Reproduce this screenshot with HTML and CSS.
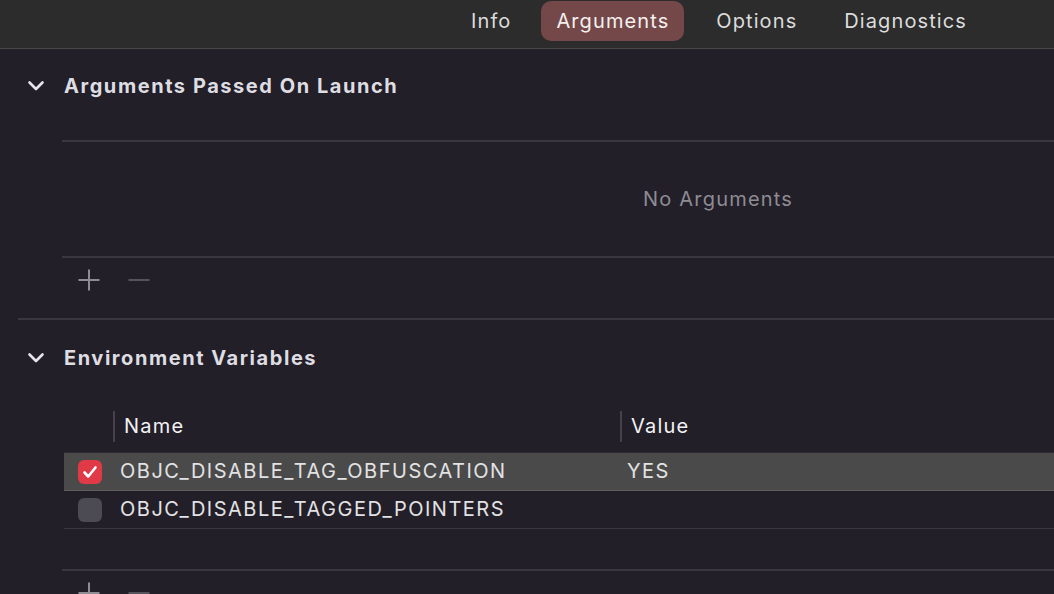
FILE: index.html
```html
<!DOCTYPE html>
<html>
<head>
<meta charset="utf-8">
<link rel="stylesheet" href="styles.css">
</head>
<body>
<header class="topbar">
  <nav class="tabs">
    <span class="tab">Info</span>
    <span class="tab active">Arguments</span>
    <span class="tab">Options</span>
    <span class="tab">Diagnostics</span>
  </nav>
</header>
<main class="content">
  <section class="section">
    <div class="section-head">
      <svg class="chevron" width="18" height="12" viewBox="0 0 18 12"><path d="M2.5 2.5 L9 9 L15.5 2.5" fill="none" stroke="#e6e6ea" stroke-width="2.6" stroke-linecap="round" stroke-linejoin="round"/></svg>
      <h2 class="section-title">Arguments Passed On Launch</h2>
    </div>
    <div class="list-box">
      <div class="empty">No Arguments</div>
    </div>
    <div class="toolbar">
      <svg class="tool" width="24" height="24" viewBox="0 0 24 24"><path d="M12 1.5 V22.5 M1.5 12 H22.5" stroke="#8f8d94" stroke-width="2"/></svg>
      <svg class="tool" width="24" height="24" viewBox="0 0 24 24"><path d="M1.5 12 H22.5" stroke="#55535b" stroke-width="2"/></svg>
    </div>
  </section>
  <div class="divider"></div>
  <section class="section">
    <div class="section-head">
      <svg class="chevron" width="18" height="12" viewBox="0 0 18 12"><path d="M2.5 2.5 L9 9 L15.5 2.5" fill="none" stroke="#e6e6ea" stroke-width="2.6" stroke-linecap="round" stroke-linejoin="round"/></svg>
      <h2 class="section-title">Environment Variables</h2>
    </div>
    <div class="table">
      <div class="thead">
        <div class="col-check"></div>
        <div class="col-name th">Name</div>
        <div class="col-value th">Value</div>
      </div>
      <div class="rows">
        <div class="row selected">
          <div class="col-check"><span class="checkbox on"><svg width="16" height="14" viewBox="0 0 16 14"><path d="M2.5 7.5 L6.2 11.5 L13.5 2.5" fill="none" stroke="#fff" stroke-width="2.6" stroke-linecap="round" stroke-linejoin="round"/></svg></span></div>
          <div class="col-name td">OBJC_DISABLE_TAG_OBFUSCATION</div>
          <div class="col-value td">YES</div>
        </div>
        <div class="row">
          <div class="col-check"><span class="checkbox"></span></div>
          <div class="col-name td">OBJC_DISABLE_TAGGED_POINTERS</div>
          <div class="col-value td"></div>
        </div>
      </div>
      <div class="table-foot"></div>
    </div>
    <div class="toolbar">
      <svg class="tool" width="24" height="24" viewBox="0 0 24 24"><path d="M12 1.5 V22.5 M1.5 12 H22.5" stroke="#8f8d94" stroke-width="2"/></svg>
      <svg class="tool" width="24" height="24" viewBox="0 0 24 24"><path d="M1.5 12 H22.5" stroke="#55535b" stroke-width="2"/></svg>
    </div>
  </section>
</main>
</body>
</html>
```

FILE: styles.css
```css
html, body {
  margin: 0;
  padding: 0;
  background: #221f29;
  font-family: Inter, "Noto Sans", "Liberation Sans", sans-serif;
  overflow: hidden;
  width: 1054px;
  height: 594px;
}

.topbar {
  height: 48px;
  background: #2c2c2c;
  border-bottom: 1px solid #474747;
  display: flex;
  align-items: flex-start;
}

.tabs {
  display: flex;
  gap: 17px;
  margin-left: 456px;
  margin-top: 1px;
}

.tab {
  height: 40px;
  padding: 0 15px;
  display: flex;
  align-items: center;
  font-size: 20px;
  color: #dcdcdc;
  border-radius: 10px;
  letter-spacing: 1.1px;
}

.tab:first-child {
  padding-right: 13px;
}

.tab.active {
  background: #744848;
  color: #f4f0f0;
}

.content {
  display: flex;
  flex-direction: column;
}

.section {
  display: flex;
  flex-direction: column;
}

.section-head {
  height: 48px;
  display: flex;
  align-items: center;
  margin-top: 13px;
}

.chevron {
  margin-left: 27px;
  margin-right: 19px;
}

.section-title {
  margin: 0;
  font-size: 20px;
  font-weight: 700;
  color: #dedde2;
  letter-spacing: 1.55px;
}

.list-box {
  margin-top: 30px;
  margin-left: 62px;
  border-top: 2px solid #3a3740;
  border-bottom: 2px solid #3a3740;
  height: 114px;
  display: flex;
  align-items: center;
}

.empty {
  padding-left: 581px;
  font-size: 20px;
  color: #8e8c93;
  letter-spacing: 1.2px;
}

.toolbar {
  height: 44px;
  margin-left: 77px;
  display: flex;
  align-items: center;
  gap: 26px;
}

.divider {
  margin-top: 16px;
  margin-left: 18px;
  height: 2px;
  background: #3a3740;
}

.section + .divider + .section .section-head {
  margin-top: 14px;
}

.table {
  margin-top: 22px;
  margin-left: 64px;
  display: flex;
  flex-direction: column;
}

.thead {
  height: 44px;
  display: flex;
  align-items: center;
  margin-bottom: 4px;
}

.col-check {
  width: 49px;
  flex: none;
  display: flex;
  align-items: center;
}

.col-name {
  width: 507px;
  flex: none;
}

.col-value {
  flex: 1;
}

.th {
  height: 31px;
  border-left: 2px solid #45424c;
  padding-left: 9px;
  display: flex;
  align-items: center;
  font-size: 20px;
  color: #f2f2f4;
  box-sizing: border-box;
  letter-spacing: 1.2px;
}

.col-name.th {
  width: 507px;
}

.rows {
  border-top: 1px solid #2e2b34;
}

.row {
  height: 37px;
  display: flex;
  align-items: center;
  border-bottom: 1px solid #3a3740;
}

.row.selected {
  background: #4a4a4a;
  border-bottom: 1px solid #5e5e5e;
}

.row .col-check {
  padding-left: 14px;
  box-sizing: border-box;
}

.td {
  font-size: 20px;
  color: #e2e2e4;
  letter-spacing: 1.5px;
  padding-bottom: 2px;
}

.row .col-name {
  padding-left: 7px;
  box-sizing: border-box;
}

.row .col-value {
  padding-left: 7px;
}

.checkbox {
  width: 24px;
  height: 24px;
  border-radius: 6px;
  background: #4c4a52;
  display: flex;
  align-items: center;
  justify-content: center;
  box-sizing: border-box;
}

.checkbox.on {
  background: #e03a47;
}

.table-foot {
  height: 40px;
  border-bottom: 2px solid #3a3740;
  margin-left: -2px;
}
```
